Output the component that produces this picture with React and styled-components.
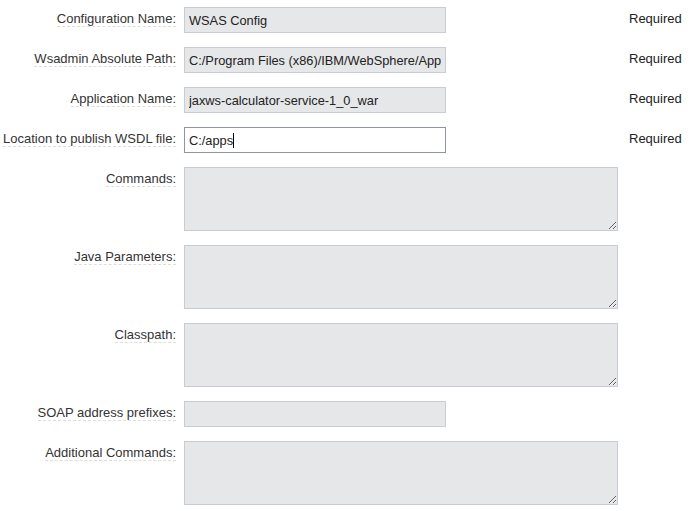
import React from "react";
import styled, { createGlobalStyle } from "styled-components";

const Global = createGlobalStyle`
  html, body { margin: 0; padding: 0; background: #fff; }
  body { font-family: "Liberation Sans", Arial, sans-serif; font-size: 13px; color: #222; }
`;

const Form = styled.form`
  display: flex;
  flex-direction: column;
  gap: 14px;
  padding: 7px 0 0 0;
`;

const Row = styled.div`
  display: flex;
  align-items: flex-start;
`;

const LabelCell = styled.div`
  width: 176px;
  flex: none;
  display: flex;
  justify-content: flex-end;
  padding-top: 4px;
`;

const Label = styled.label`
  color: #333;
  line-height: 15px;
  border-bottom: 1px dashed #dedede;
  white-space: nowrap;
`;

const FieldCell = styled.div`
  width: 434px;
  flex: none;
  margin-left: 8px;
  display: flex;
`;

const TextInput = styled.input`
  box-sizing: border-box;
  width: 262px;
  height: 26px;
  margin: 0;
  padding: 0 4px;
  border: 1px solid #c9cbd6;
  background: #e6e7e9;
  font: inherit;
  font-size: 12.8px;
  color: #222;
  outline: none;
`;

const FocusField = styled.div`
  box-sizing: border-box;
  width: 262px;
  height: 26px;
  padding: 0 4px;
  border: 1px solid #8f95a3;
  background: #fff;
  color: #222;
  font-size: 12.8px;
  display: flex;
  align-items: center;
`;

const Caret = styled.span`
  display: inline-block;
  width: 1px;
  height: 15px;
  background: #000;
`;

const Area = styled.textarea`
  box-sizing: border-box;
  width: 434px;
  height: 64px;
  margin: 0;
  padding: 4px;
  border: 1px solid #c9cbd6;
  background: #e6e7e9;
  font: inherit;
  color: #222;
  resize: vertical;
  outline: none;
  display: block;
`;

const Required = styled.span`
  margin-left: 11px;
  padding-top: 4px;
  line-height: 15px;
  color: #222;
`;

const fields = [
  { label: "Configuration Name:", value: "WSAS Config", req: true },
  { label: "Wsadmin Absolute Path:", value: "C:/Program Files (x86)/IBM/WebSphere/AppServer/bin/wsadmin.bat", req: true },
  { label: "Application Name:", value: "jaxws-calculator-service-1_0_war", req: true },
  { label: "Location to publish WSDL file:", value: "C:/apps", req: true, focus: true },
  { label: "Commands:", area: true },
  { label: "Java Parameters:", area: true },
  { label: "Classpath:", area: true },
  { label: "SOAP address prefixes:", value: "" },
  { label: "Additional Commands:", area: true },
];

export default function App() {
  return (
    <>
      <Global />
      <Form onSubmit={(e) => e.preventDefault()}>
        {fields.map((f) => (
          <Row key={f.label}>
            <LabelCell>
              <Label>{f.label}</Label>
            </LabelCell>
            <FieldCell>
              {f.area ? (
                <Area />
              ) : f.focus ? (
                <FocusField>
                  {f.value}
                  <Caret />
                </FocusField>
              ) : (
                <TextInput defaultValue={f.value} readOnly />
              )}
            </FieldCell>
            {f.req && <Required>Required</Required>}
          </Row>
        ))}
      </Form>
    </>
  );
}
